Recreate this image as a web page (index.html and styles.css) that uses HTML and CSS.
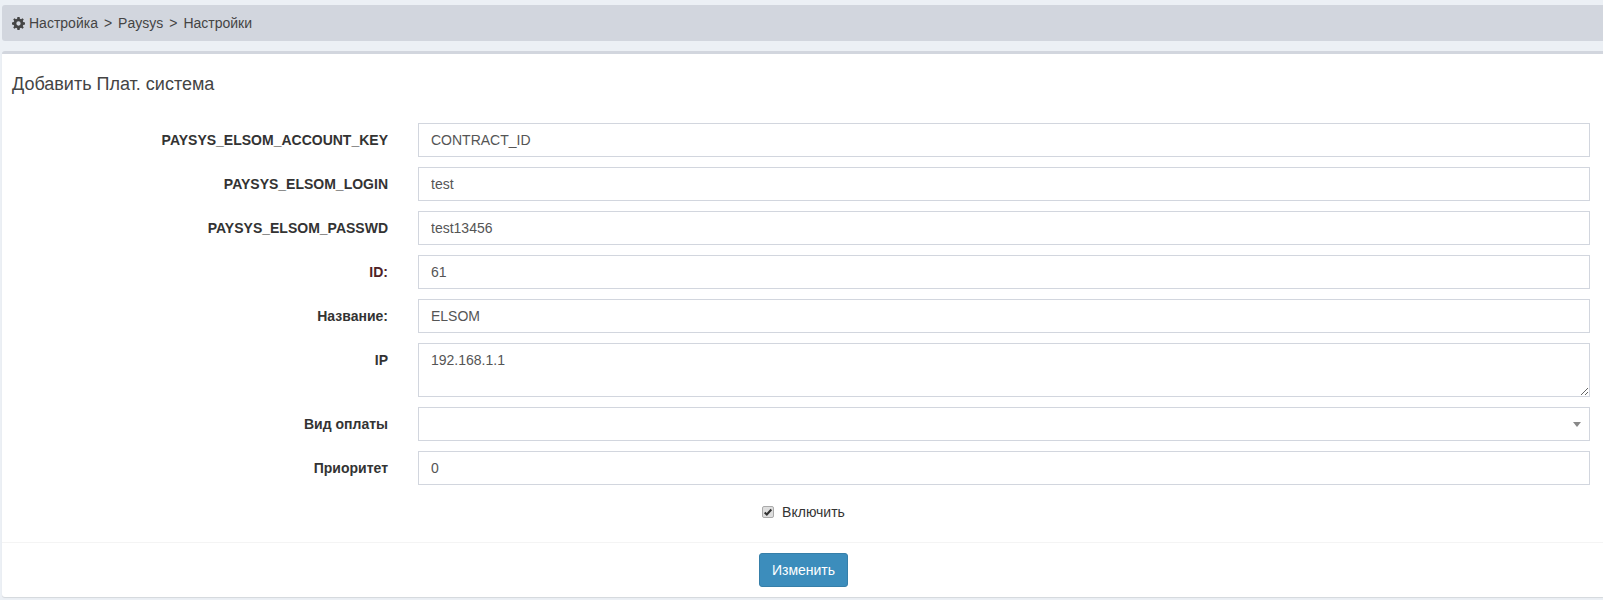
FILE: index.html
```html
<!DOCTYPE html>
<html lang="ru">
<head>
<meta charset="utf-8">
<title>Paysys</title>
<link rel="stylesheet" href="styles.css">
</head>
<body>
<nav class="crumbs">
  <svg class="gear" viewBox="0 0 24 24" width="13" height="13"><path fill="#444" fill-rule="evenodd" d="M10 0h4l.6 3.2 2.1.9L19.4 2.3l2.3 2.3-1.8 2.7.9 2.1L24 10v4l-3.2.6-.9 2.1 1.8 2.7-2.3 2.3-2.7-1.8-2.1.9L14 24h-4l-.6-3.2-2.1-.9-2.7 1.8-2.3-2.3 1.8-2.7-.9-2.1L0 14v-4l3.2-.6.9-2.1-1.8-2.7 2.3-2.3 2.7 1.8 2.1-.9zM12 8a4 4 0 1 0 0 8 4 4 0 0 0 0-8z"/></svg>
  <span>Настройка</span><span class="sep">&gt;</span><span>Paysys</span><span class="sep">&gt;</span><span>Настройки</span>
</nav>
<form class="card">
  <h3 class="card-title">Добавить Плат. система</h3>
  <div class="card-body">
    <div class="row"><label class="lbl">PAYSYS_ELSOM_ACCOUNT_KEY</label><input class="ctl" value="CONTRACT_ID"></div>
    <div class="row"><label class="lbl">PAYSYS_ELSOM_LOGIN</label><input class="ctl" value="test"></div>
    <div class="row"><label class="lbl">PAYSYS_ELSOM_PASSWD</label><input class="ctl" value="test13456"></div>
    <div class="row"><label class="lbl req">ID:</label><input class="ctl" value="61"></div>
    <div class="row"><label class="lbl">Название:</label><input class="ctl" value="ELSOM"></div>
    <div class="row"><label class="lbl">IP</label><textarea class="ctl area">192.168.1.1</textarea></div>
    <div class="row"><label class="lbl">Вид оплаты</label><div class="ctl sel"><span class="arrow"></span></div></div>
    <div class="row"><label class="lbl">Приоритет</label><input class="ctl" value="0"></div>
    <div class="check">
      <span class="box"><svg viewBox="0 0 12 12" width="10" height="10"><path d="M2 6.5 4.6 9 10 3" fill="none" stroke="#333" stroke-width="2.4"/></svg></span>
      <span>Включить</span>
    </div>
  </div>
  <div class="card-footer"><button type="button" class="btn">Изменить</button></div>
</form>
</body>
</html>
```
FILE: styles.css
```css
* { box-sizing: border-box; }
html, body { height: 100%; }
body {
  margin: 0;
  padding: 5px 0 0 2px;
  background: #ecf0f5;
  font-family: "Liberation Sans", Arial, sans-serif;
  font-size: 14px;
  color: #333;
  overflow: hidden;
}
.crumbs {
  display: flex;
  align-items: center;
  height: 36px;
  padding: 0 10px;
  background: #d2d6de;
  border-radius: 3px 0 0 3px;
  color: #444;
}
.gear { margin-right: 4px; }
.sep { margin: 0 6px; }
.card {
  margin-top: 10px;
  height: 546px;
  background: #fff;
  border-top: 3px solid #d2d6de;
  border-radius: 3px 0 0 3px;
  box-shadow: 0 1px 1px rgba(0,0,0,.1);
}
.card-title {
  margin: 0;
  padding: 20px 10px 0;
  font-size: 18px;
  font-weight: 400;
  line-height: 20px;
  color: #444;
}
.card-body { padding: 29px 13px 0 0; }
.row { display: flex; margin-bottom: 10px; }
.lbl {
  width: 386px;
  margin-right: 30px;
  padding-top: 7px;
  text-align: right;
  font-weight: 700;
  line-height: 20px;
  flex: none;
}
.req { color: #4f2226; }
.ctl {
  flex: 1;
  display: block;
  height: 34px;
  padding: 6px 12px;
  border: 1px solid #d2d6de;
  border-radius: 0;
  background: #fff;
  color: #555;
  font: 14px/20px "Liberation Sans", Arial, sans-serif;
  outline: none;
}
.area { height: 54px; }
.sel { position: relative; }
.arrow {
  position: absolute;
  right: 8px;
  top: 14px;
  border-style: solid;
  border-width: 5px 4px 0;
  border-color: #888 transparent transparent;
}
.check {
  display: flex;
  align-items: center;
  justify-content: center;
  height: 34px;
  margin-left: 15px;
  color: #333;
}
.box {
  display: flex;
  align-items: center;
  justify-content: center;
  width: 12px;
  height: 12px;
  margin-right: 8px;
  background: #dedede;
  border: 1px solid #aaa;
  border-radius: 2px;
}
.card-footer {
  margin-top: 13px;
  padding: 10px 2px 0 4px;
  border-top: 1px solid #f4f4f4;
  text-align: center;
}
.btn {
  width: 89px;
  height: 34px;
  background: #3c8dbc;
  border: 1px solid #367fa9;
  border-radius: 3px;
  color: #fff;
  font: 14px "Liberation Sans", Arial, sans-serif;
}
```
